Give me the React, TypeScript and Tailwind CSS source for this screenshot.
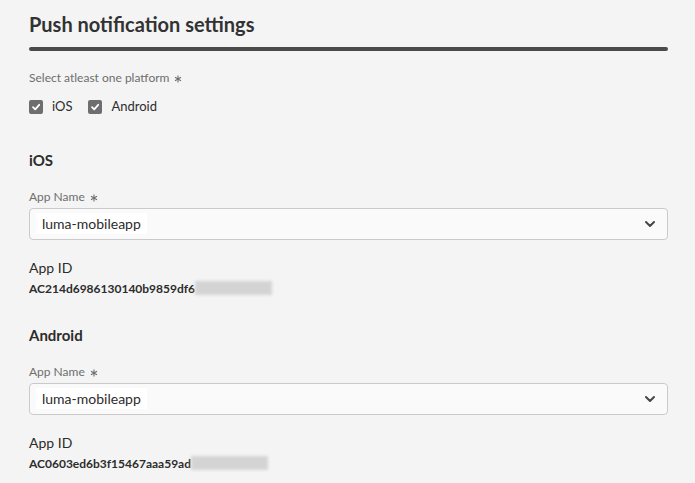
import React from "react";

const font = { fontFamily: "Lato, 'Noto Sans', sans-serif" };

function Star() {
  return (
    <svg className="ml-[5px] inline-block align-[-1px]" width="8" height="8" viewBox="0 0 8 8" fill="none">
      <path d="M4 0.5 V7.5 M1 2.2 L7 5.8 M7 2.2 L1 5.8" stroke="#6e6e6e" strokeWidth="1.1" />
    </svg>
  );
}

function Check() {
  return (
    <span className="flex h-[14px] w-[14px] items-center justify-center rounded-[2px] bg-[#6e6e6e]">
      <svg width="10" height="10" viewBox="0 0 10 10" fill="none">
        <path d="M2 5.2 L4.2 7.4 L8.2 2.8" stroke="white" strokeWidth="1.8" strokeLinecap="round" strokeLinejoin="round" />
      </svg>
    </span>
  );
}

function Select() {
  return (
    <div className="flex h-[32px] items-center justify-between rounded-[4px] border border-[#cacaca] bg-[#fafafa] pl-[6px] pr-[11px]">
      <span className="bg-white px-[6px] py-[2px] text-[14px] leading-[17px] text-[#2c2c2c]">luma-mobileapp</span>
      <svg width="12" height="8" viewBox="0 0 12 8" fill="none">
        <path d="M2 2 L6 6 L10 2" stroke="#464646" strokeWidth="2" strokeLinecap="round" strokeLinejoin="round" />
      </svg>
    </div>
  );
}

function Section({ title, id }: { title: string; id: string }) {
  return (
    <div>
      <div className="text-[15px] font-bold leading-[20px] text-[#2c2c2c]">{title}</div>
      <div className="mt-[19px] text-[12px] leading-[16px] text-[#6e6e6e]">App Name<Star /></div>
      <div className="mt-[3px]"><Select /></div>
      <div className="mt-[19px] text-[14px] leading-[18px] text-[#2c2c2c]">App ID</div>
      <div className="mt-[3px] flex items-center text-[12px] font-bold leading-[17px] text-[#2c2c2c]">
        <span>{id}</span>
        <span className="h-[14px] w-[77px] bg-[#d4d4d4] blur-[1.5px]" />
      </div>
    </div>
  );
}

export default function App() {
  return (
    <div className="min-h-[483px] w-[695px] bg-[#f4f4f4] pl-[29px] pr-[27px]" style={font}>
      <div className="pt-[10px] text-[20px] font-bold leading-[28px] text-[#323232]">Push notification settings</div>
      <div className="mt-[9px] h-[4px] rounded-full bg-[#4b4b4b]" />
      <div className="mt-[19px] text-[12px] leading-[16px] text-[#6e6e6e]">Select atleast one platform<Star /></div>
      <div className="mt-[11px] flex items-center text-[13px] text-[#2c2c2c]">
        <Check />
        <span className="ml-[9px]">iOS</span>
        <span className="ml-[16px]"><Check /></span>
        <span className="ml-[9px]">Android</span>
      </div>
      <div className="mt-[33px]">
        <Section title="iOS" id="AC214d6986130140b9859df6" />
      </div>
      <div className="mt-[28px]">
        <Section title="Android" id="AC0603ed6b3f15467aaa59ad" />
      </div>
    </div>
  );
}
